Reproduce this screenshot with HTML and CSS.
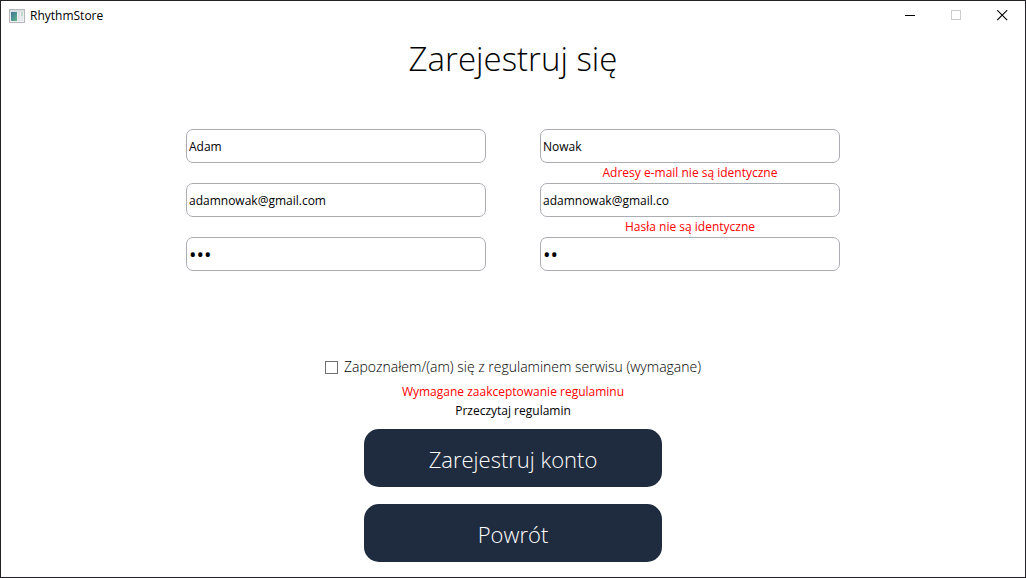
FILE: index.html
```html
<!DOCTYPE html>
<html lang="pl">
<head>
<meta charset="utf-8">
<meta name="viewport" content="width=device-width, initial-scale=1">
<title>RhythmStore</title>
<link rel="stylesheet" href="styles.css">
</head>
<body>
<div class="window">
  <header class="titlebar">
    <svg class="app-icon" viewBox="0 0 16 14" aria-hidden="true">
      <defs>
        <linearGradient id="pane" x1="0" y1="0" x2="1" y2="1">
          <stop offset="0" stop-color="#3f729c"/>
          <stop offset="1" stop-color="#62b585"/>
        </linearGradient>
      </defs>
      <rect x="0.5" y="0.5" width="15" height="13" fill="#eef0f2" stroke="#b4b8bc"/>
      <rect x="1" y="1" width="14" height="2" fill="#dcdfe2"/>
      <rect x="2" y="3" width="6" height="9" fill="url(#pane)"/>
      <rect x="9" y="3" width="2" height="9" fill="#dfe3e8"/>
      <rect x="12" y="3" width="2" height="4" fill="#bcd8c8"/>
      <rect x="12" y="7" width="2" height="5" fill="#e4e7ec"/>
    </svg>
    <span class="app-name">RhythmStore</span>
    <div class="controls">
      <button class="control" type="button" aria-label="Minimalizuj">
        <svg class="glyph" viewBox="0 0 11 11"><path d="M0 5.5H10" stroke="#000"/></svg>
      </button>
      <button class="control" type="button" aria-label="Maksymalizuj" disabled>
        <svg class="glyph" viewBox="0 0 11 11"><rect x="0.5" y="0.5" width="9" height="9" fill="none" stroke="#ccc"/></svg>
      </button>
      <button class="control" type="button" aria-label="Zamknij">
        <svg class="glyph" viewBox="0 0 11 11"><path d="M0.2 0.2L10.2 10.2M10.2 0.2L0.2 10.2" stroke="#000" stroke-width="1.1"/></svg>
      </button>
    </div>
  </header>
  <main class="page">
    <h1 class="title">Zarejestruj się</h1>
    <form class="form">
      <div class="fields">
        <input class="field" type="text" aria-label="Imię" value="Adam">
        <input class="field" type="text" aria-label="Nazwisko" value="Nowak">
        <p class="error error-right">Adresy e-mail nie są identyczne</p>
        <input class="field" type="text" aria-label="E-mail" value="adamnowak@gmail.com">
        <input class="field" type="text" aria-label="Powtórz e-mail" value="adamnowak@gmail.co">
        <p class="error error-right">Hasła nie są identyczne</p>
        <input class="field password" type="password" aria-label="Hasło" value="abc">
        <input class="field password" type="password" aria-label="Powtórz hasło" value="ab">
      </div>
      <div class="terms">
        <label class="consent"><input class="tick" type="checkbox"><span>Zapoznałem/(am) się z regulaminem serwisu (wymagane)</span></label>
        <p class="error">Wymagane zaakceptowanie regulaminu</p>
        <a class="link" href="#regulamin">Przeczytaj regulamin</a>
      </div>
      <div class="actions">
        <button class="action" type="button">Zarejestruj konto</button>
        <button class="action" type="button">Powrót</button>
      </div>
    </form>
  </main>
</div>
</body>
</html>
```
FILE: styles.css
```css
* {
  box-sizing: border-box;
}

body {
  margin: 0;
  background: #fff;
  color: #000;
  font: 12px/18px "Open Sans", "Noto Sans", sans-serif;
}

.window {
  min-height: 100vh;
  border: 1px solid #222226;
}

.titlebar {
  display: flex;
  align-items: center;
  height: 29px;
  padding-left: 8px;
}

.app-icon {
  width: 16px;
  height: 14px;
}

.app-name {
  margin-left: 5px;
}

.controls {
  display: flex;
  margin-left: auto;
}

.control {
  display: grid;
  place-items: center;
  width: 46px;
  height: 29px;
  padding: 0;
  border: 0;
  background: none;
}

.glyph {
  width: 11px;
  height: 11px;
}

.title {
  margin: 0;
  padding-top: 2px;
  font-size: 33px;
  font-weight: 300;
  line-height: 54px;
  text-align: center;
}

.form {
  display: flex;
  flex-direction: column;
  align-items: center;
  padding: 0 24px 15px;
}

.fields {
  display: grid;
  grid-template-columns: 1fr 1fr;
  column-gap: 54px;
  width: 100%;
  max-width: 654px;
  margin-top: 43px;
}

.field {
  width: 100%;
  height: 34px;
  padding: 0 2px;
  border: 1px solid #abadb3;
  border-radius: 7px;
  background: #fff;
  color: #000;
  font: inherit;
}

.password {
  font-size: 20px;
}

.error {
  margin: 0;
  color: #f00;
  line-height: 20px;
  text-align: center;
}

.error-right {
  grid-column: 2;
}

.terms {
  display: flex;
  flex-direction: column;
  align-items: center;
  margin-top: 84px;
}

.consent {
  display: flex;
  align-items: center;
  gap: 6px;
  margin-bottom: 3px;
  font-size: 14px;
  font-weight: 300;
  line-height: 24px;
}

.tick {
  appearance: none;
  width: 13px;
  height: 13px;
  margin: 0;
  border: 1px solid #707070;
  background: #fff;
}

.tick:checked {
  background: #1f2b3e;
}

.link {
  color: inherit;
  text-decoration: none;
}

.actions {
  display: grid;
  gap: 17px;
  width: 100%;
  max-width: 298px;
  margin-top: 9px;
}

.action {
  height: 58px;
  padding: 2px 0 0;
  border: 0;
  border-radius: 15px;
  background: #1f2b3e;
  color: #fff;
  font: 300 22px/32px "Open Sans", "Noto Sans", sans-serif;
}
```
